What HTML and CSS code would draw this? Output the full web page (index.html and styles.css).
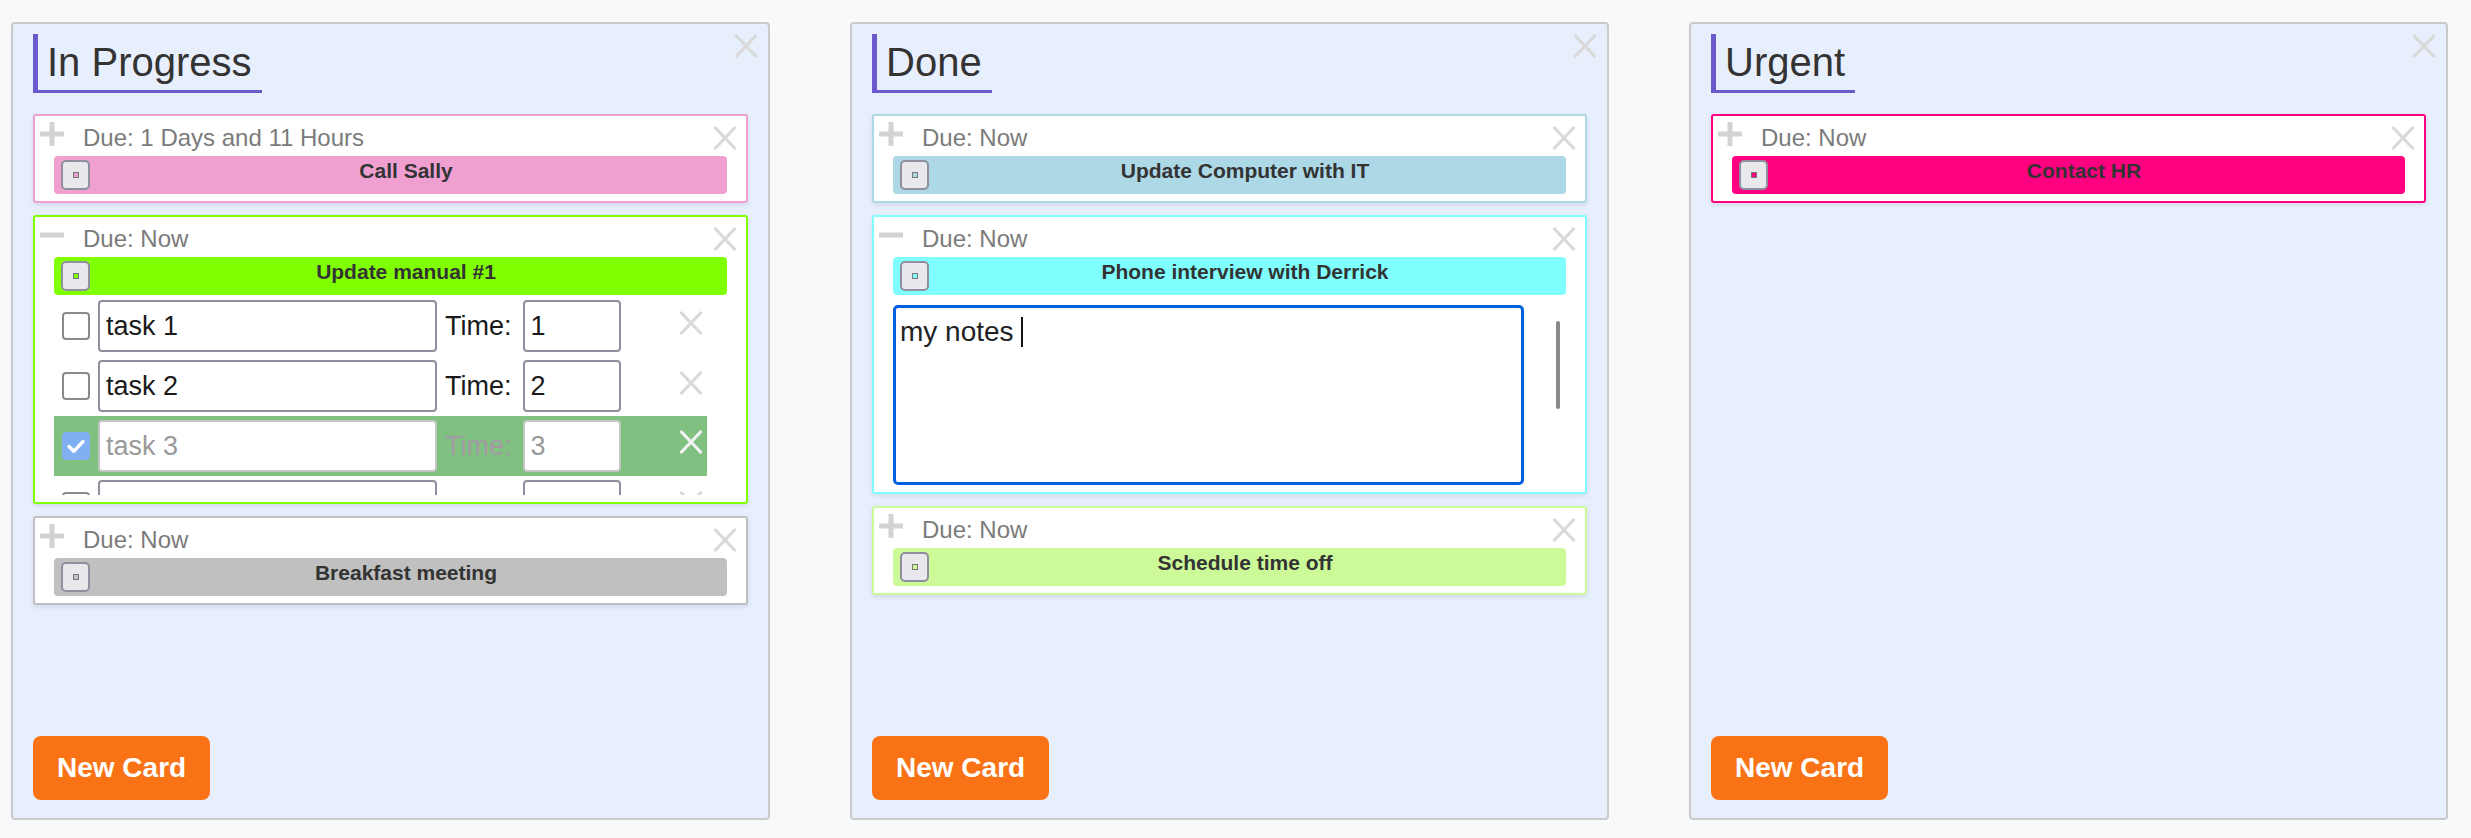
FILE: index.html
```html
<!DOCTYPE html>
<html lang="en">
<head>
<meta charset="utf-8">
<title>Board</title>
<link rel="stylesheet" href="styles.css">
</head>
<body>
<div class="board">

  <section class="panel">
    <svg class="panel-close ico-x" viewBox="0 0 24 24"><path d="M2.5 2L21.5 22M21.5 2L2.5 22"/></svg>
    <h2 class="panel-title">In Progress</h2>
    <div class="cards">
      <div class="card pink">
        <div class="card-head">
          <svg class="toggle" viewBox="0 0 24 24"><path d="M0 12H24M12 0V24"/></svg>
          <span class="due">Due: 1 Days and 11 Hours</span>
          <svg class="card-close ico-x" viewBox="0 0 24 24"><path d="M2.5 2L21.5 22M21.5 2L2.5 22"/></svg>
        </div>
        <div class="bar"><span class="swatch"><span class="swatch-in"></span></span><span class="title">Call Sally</span></div>
      </div>

      <div class="card lime">
        <div class="card-head">
          <svg class="toggle" viewBox="0 0 24 24"><path d="M0 12H24"/></svg>
          <span class="due">Due: Now</span>
          <svg class="card-close ico-x" viewBox="0 0 24 24"><path d="M2.5 2L21.5 22M21.5 2L2.5 22"/></svg>
        </div>
        <div class="bar"><span class="swatch"><span class="swatch-in"></span></span><span class="title">Update manual #1</span></div>
        <div class="tasks">
          <div class="task">
            <span class="check"></span>
            <input class="tinput" type="text" value="task 1">
            <span class="tlabel">Time:</span>
            <input class="timeinput" type="text" value="1">
            <svg class="task-close ico-x" viewBox="0 0 24 24"><path d="M2.5 2L21.5 22M21.5 2L2.5 22"/></svg>
          </div>
          <div class="task">
            <span class="check"></span>
            <input class="tinput" type="text" value="task 2">
            <span class="tlabel">Time:</span>
            <input class="timeinput" type="text" value="2">
            <svg class="task-close ico-x" viewBox="0 0 24 24"><path d="M2.5 2L21.5 22M21.5 2L2.5 22"/></svg>
          </div>
          <div class="task done">
            <svg class="check checked" viewBox="0 0 28 28"><rect width="28" height="28" rx="4"/><path d="M7 14.5l4.8 4.8L21 9.5"/></svg>
            <input class="tinput" type="text" value="task 3" disabled>
            <span class="tlabel">Time:</span>
            <input class="timeinput" type="text" value="3" disabled>
            <svg class="task-close ico-x" viewBox="0 0 24 24"><path d="M2.5 2L21.5 22M21.5 2L2.5 22"/></svg>
          </div>
          <div class="task">
            <span class="check"></span>
            <input class="tinput" type="text" value="">
            <span class="tlabel tlabel-empty"></span>
            <input class="timeinput" type="text" value="">
            <svg class="task-close ico-x" viewBox="0 0 24 24"><path d="M2.5 2L21.5 22M21.5 2L2.5 22"/></svg>
          </div>
        </div>
      </div>

      <div class="card silver">
        <div class="card-head">
          <svg class="toggle" viewBox="0 0 24 24"><path d="M0 12H24M12 0V24"/></svg>
          <span class="due">Due: Now</span>
          <svg class="card-close ico-x" viewBox="0 0 24 24"><path d="M2.5 2L21.5 22M21.5 2L2.5 22"/></svg>
        </div>
        <div class="bar"><span class="swatch"><span class="swatch-in"></span></span><span class="title">Breakfast meeting</span></div>
      </div>
    </div>
    <button class="new-card">New Card</button>
  </section>

  <section class="panel">
    <svg class="panel-close ico-x" viewBox="0 0 24 24"><path d="M2.5 2L21.5 22M21.5 2L2.5 22"/></svg>
    <h2 class="panel-title">Done</h2>
    <div class="cards">
      <div class="card lightblue">
        <div class="card-head">
          <svg class="toggle" viewBox="0 0 24 24"><path d="M0 12H24M12 0V24"/></svg>
          <span class="due">Due: Now</span>
          <svg class="card-close ico-x" viewBox="0 0 24 24"><path d="M2.5 2L21.5 22M21.5 2L2.5 22"/></svg>
        </div>
        <div class="bar"><span class="swatch"><span class="swatch-in"></span></span><span class="title">Update Computer with IT</span></div>
      </div>

      <div class="card cyan">
        <div class="card-head">
          <svg class="toggle" viewBox="0 0 24 24"><path d="M0 12H24"/></svg>
          <span class="due">Due: Now</span>
          <svg class="card-close ico-x" viewBox="0 0 24 24"><path d="M2.5 2L21.5 22M21.5 2L2.5 22"/></svg>
        </div>
        <div class="bar"><span class="swatch"><span class="swatch-in"></span></span><span class="title">Phone interview with Derrick</span></div>
        <div class="notes">
          <div class="notes-box">my notes <span class="caret"></span></div>
          <span class="thumb"></span>
        </div>
      </div>

      <div class="card mint">
        <div class="card-head">
          <svg class="toggle" viewBox="0 0 24 24"><path d="M0 12H24M12 0V24"/></svg>
          <span class="due">Due: Now</span>
          <svg class="card-close ico-x" viewBox="0 0 24 24"><path d="M2.5 2L21.5 22M21.5 2L2.5 22"/></svg>
        </div>
        <div class="bar"><span class="swatch"><span class="swatch-in"></span></span><span class="title">Schedule time off</span></div>
      </div>
    </div>
    <button class="new-card">New Card</button>
  </section>

  <section class="panel">
    <svg class="panel-close ico-x" viewBox="0 0 24 24"><path d="M2.5 2L21.5 22M21.5 2L2.5 22"/></svg>
    <h2 class="panel-title">Urgent</h2>
    <div class="cards">
      <div class="card hotpink">
        <div class="card-head">
          <svg class="toggle" viewBox="0 0 24 24"><path d="M0 12H24M12 0V24"/></svg>
          <span class="due">Due: Now</span>
          <svg class="card-close ico-x" viewBox="0 0 24 24"><path d="M2.5 2L21.5 22M21.5 2L2.5 22"/></svg>
        </div>
        <div class="bar"><span class="swatch"><span class="swatch-in"></span></span><span class="title">Contact HR</span></div>
      </div>
    </div>
    <button class="new-card">New Card</button>
  </section>

</div>
</body>
</html>
```

FILE: styles.css
```css
* { box-sizing: border-box; }

html, body {
  margin: 0;
  background: #f8f9fb;
  font-family: "Liberation Sans", Arial, sans-serif;
  color: #333;
}

.board {
  display: flex;
  gap: 80px;
  padding: 22px 0 0 11px;
}

.panel {
  position: relative;
  display: flex;
  flex-direction: column;
  width: 759px;
  height: 798px;
  flex: 0 0 759px;
  background: #e8effc;
  border: 2px solid #cacaca;
  border-radius: 4px;
  padding: 10px 20px 18px 20px;
}

.ico-x {
  width: 24px;
  height: 24px;
  fill: none;
  stroke: #d9d9d9;
  stroke-width: 3.2;
  stroke-linecap: round;
  flex: none;
}

.panel-close {
  position: absolute;
  top: 10px;
  right: 10px;
}

.panel-title {
  align-self: flex-start;
  margin: 0;
  font-size: 40px;
  font-weight: normal;
  line-height: 46px;
  color: #333;
  border-left: 5px solid #6a5acd;
  border-bottom: 3px solid #6a5acd;
  padding: 5px 10px 5px 9px;
}

.cards {
  display: flex;
  flex-direction: column;
  gap: 12px;
  margin-top: 21px;
}

.card {
  background: #fff;
  border: 2px solid var(--c);
  border-radius: 3px;
  padding-bottom: 7px;
  box-shadow: 0 2px 5px rgba(40, 60, 110, 0.12);
}

.pink { --c: #f0a0d0; }
.lime { --c: #80ff00; }
.silver { --c: #c0c0c0; }
.lightblue { --c: #add8e6; }
.cyan { --c: #80ffff; }
.mint { --c: #ccfa99; }
.hotpink { --c: #ff0080; }

.card-head {
  display: flex;
  align-items: flex-start;
  height: 40px;
}

.toggle {
  width: 24px;
  height: 24px;
  margin: 6px 0 0 5px;
  fill: none;
  stroke: #d3d3d3;
  stroke-width: 5;
  flex: none;
}

.due {
  margin: 8px 0 0 19px;
  font-size: 24px;
  line-height: 27px;
  color: #7b7b7b;
}

.card-close {
  margin: 10px 9px 0 auto;
}

.bar {
  display: flex;
  align-items: flex-start;
  height: 38px;
  margin: 0 19px;
  border-radius: 4px;
  background: var(--c);
}

.swatch {
  display: flex;
  align-items: center;
  justify-content: center;
  width: 29px;
  height: 30px;
  margin: 4px 0 0 7px;
  border: 2px solid #8f8f9d;
  border-radius: 5px;
  background: #e9e9ed;
  flex: none;
}

.swatch-in {
  width: 6px;
  height: 6px;
  border: 1px solid #777;
  background: var(--c);
}

.title {
  flex: 1;
  margin-top: 3px;
  padding-right: 5px;
  text-align: center;
  font-size: 21px;
  line-height: 24px;
  font-weight: bold;
  color: #333;
}

.tasks {
  height: 199px;
  margin: 1px 39px 0 19px;
  overflow: hidden;
}

.task {
  display: flex;
  align-items: center;
  height: 60px;
  flex: none;
}

.task.done {
  background: #80c080;
}

.check {
  display: block;
  width: 28px;
  height: 28px;
  margin-left: 8px;
  border: 2px solid #8a8a8a;
  border-radius: 4px;
  background: #fff;
  flex: none;
}

.check.checked {
  border: none;
  background: none;
}

.check.checked rect { fill: #80b0f2; }
.check.checked path {
  fill: none;
  stroke: #fff;
  stroke-width: 3.4;
  stroke-linecap: round;
  stroke-linejoin: round;
}

.tinput,
.timeinput {
  height: 52px;
  border: 2px solid #8f8f9d;
  border-radius: 4px;
  background: #fff;
  padding: 0 6px;
  font-family: "Liberation Sans", Arial, sans-serif;
  font-size: 27px;
  color: #1a1a1a;
  outline: none;
  flex: none;
}

.tinput {
  width: 339px;
  margin-left: 8px;
}

.timeinput {
  width: 98px;
  margin-left: 11px;
}

.tinput:disabled,
.timeinput:disabled {
  border-color: #c4c4c4;
  color: #9a9a9a;
  background: #fff;
}

.tlabel {
  margin-left: 8px;
  font-size: 27px;
  color: #1a1a1a;
}

.tlabel-empty {
  width: 67px;
  flex: none;
}

.done .tlabel {
  color: #a39aa6;
}

.task-close {
  align-self: flex-start;
  margin: 15px 4px 0 auto;
}

.done .task-close {
  stroke: #f2f2f2;
  margin-top: 14px;
}

.notes {
  display: flex;
  margin: 10px 19px 0 19px;
}

.notes-box {
  width: 631px;
  height: 180px;
  border: 3px solid #0060df;
  border-radius: 5px;
  padding: 8px 4px;
  font-size: 28px;
  line-height: 32px;
  color: #222;
  background: #fff;
  flex: none;
}

.caret {
  display: inline-block;
  width: 2px;
  height: 30px;
  background: #111;
  vertical-align: -6px;
}

.thumb {
  width: 4px;
  height: 88px;
  margin: 16px 6px 0 auto;
  border-radius: 2px;
  background: #8a8a8a;
}

.new-card {
  align-self: flex-start;
  margin-top: auto;
  height: 64px;
  padding: 0 24px;
  border: none;
  border-radius: 8px;
  background: #f97316;
  color: #fff;
  font-family: "Liberation Sans", Arial, sans-serif;
  font-size: 28px;
  font-weight: bold;
  line-height: 32px;
}
```
